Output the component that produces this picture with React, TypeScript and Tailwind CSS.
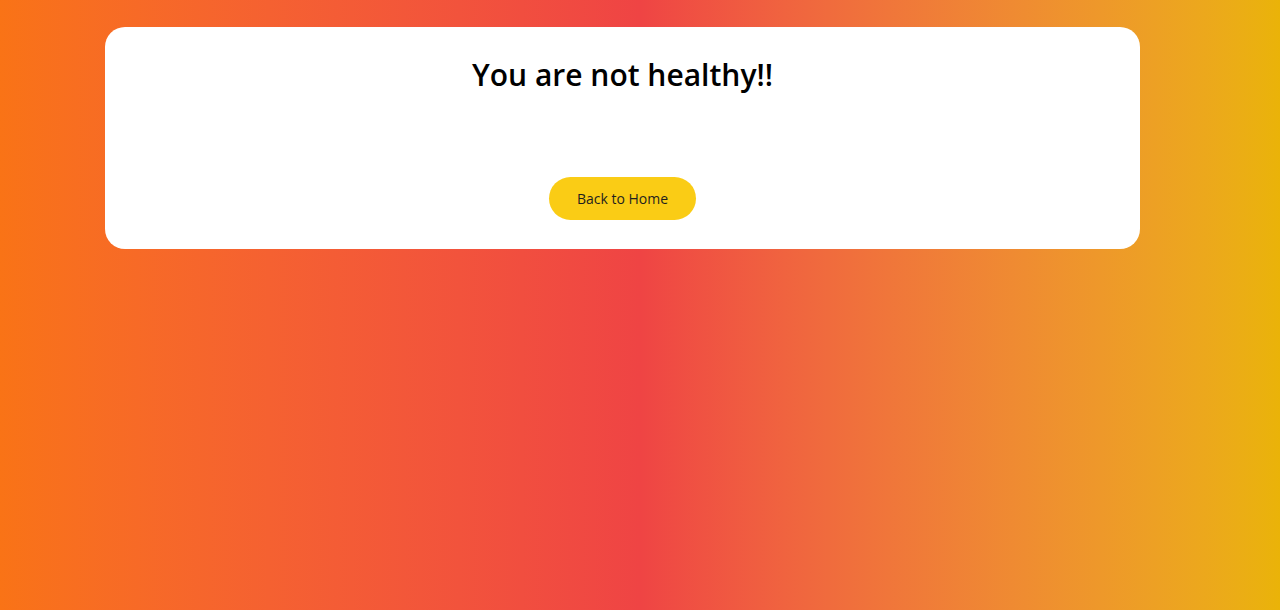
export default function App() {
  return (
    <div className="min-h-[610px] w-full bg-gradient-to-r from-[#f97316] via-[#ef4444] to-[#eab308] pt-[27px] font-['Open_Sans',sans-serif]">
      <div className="ml-[105px] flex w-[1035px] flex-col items-center rounded-[20px] bg-white pt-[28px] pb-[29px]">
        <h1 className="text-[30px] leading-[40px] font-semibold text-black">
          You are not healthy!!
        </h1>
        <button className="mt-[82px] h-[43px] w-[147px] rounded-full bg-[#facc15] text-[14px] text-[#1f1f1f]">
          Back to Home
        </button>
      </div>
    </div>
  );
}
